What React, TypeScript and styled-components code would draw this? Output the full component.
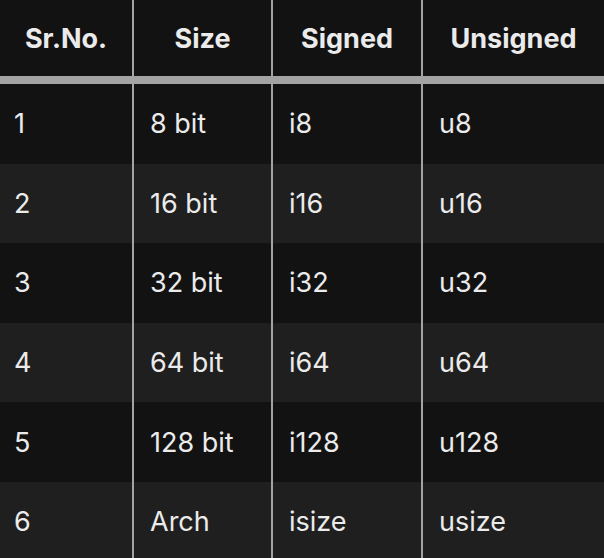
import React from "react";
import styled, { createGlobalStyle } from "styled-components";

const Global = createGlobalStyle`
  html, body { margin: 0; padding: 0; background: #121212; }
  body { font-family: Inter, "Noto Sans", sans-serif; }
`;

const Table = styled.table`
  border-collapse: collapse;
  width: 604px;
  table-layout: fixed;
  color: #ebebeb;
  font-size: 27px;
  background: #121212;
`;

const Col = styled.col<{ $w: number }>`
  width: ${(p) => p.$w}px;
`;

const Th = styled.th`
  height: 76px;
  padding: 0;
  font-weight: 700;
  text-align: center;
  border-bottom: 8px solid #a3a3a3;
  & + & { border-left: 2px solid #a3a3a3; }
`;

const Row = styled.tr<{ $alt: boolean }>`
  background: ${(p) => (p.$alt ? "#1f1f1f" : "#121212")};
`;

const Td = styled.td`
  height: 79.6px;
  padding: 0 0 0 16px;
  font-weight: 400;
  text-align: left;
  &:first-child { padding-left: 14px; }
  & + & { border-left: 2px solid #a3a3a3; }
`;

const widths = [133, 139, 150, 182];
const headers = ["Sr.No.", "Size", "Signed", "Unsigned"];
const rows = [
  ["1", "8 bit", "i8", "u8"],
  ["2", "16 bit", "i16", "u16"],
  ["3", "32 bit", "i32", "u32"],
  ["4", "64 bit", "i64", "u64"],
  ["5", "128 bit", "i128", "u128"],
  ["6", "Arch", "isize", "usize"],
];

export default function App() {
  return (
    <>
      <Global />
      <Table>
        <colgroup>
          {widths.map((w, i) => (
            <Col key={i} $w={w} />
          ))}
        </colgroup>
        <thead>
          <tr>
            {headers.map((h) => (
              <Th key={h}>{h}</Th>
            ))}
          </tr>
        </thead>
        <tbody>
          {rows.map((r, i) => (
            <Row key={i} $alt={i % 2 === 1}>
              {r.map((c, j) => (
                <Td key={j}>{c}</Td>
              ))}
            </Row>
          ))}
        </tbody>
      </Table>
    </>
  );
}
